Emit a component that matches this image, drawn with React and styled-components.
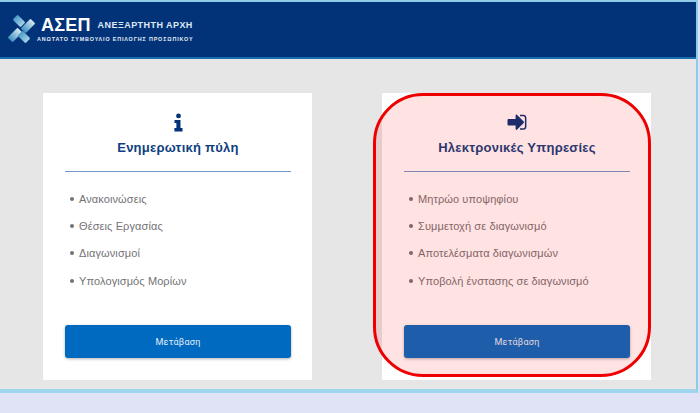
import styled, { createGlobalStyle } from 'styled-components'

const GlobalStyle = createGlobalStyle`
  html, body {
    margin: 0;
    padding: 0;
    background: #dfe3f5;
    font-family: "Liberation Sans", Arial, sans-serif;
  }
`
const Page = styled.div`
  width: 700px;
  height: 413px;
  overflow: hidden;
  display: flex;
  flex-direction: column;
`
const Frame = styled.div`
  width: 698px;
  height: 393px;
  display: flex;
  flex-direction: column;
  border-top: 2px solid #8fcbe6;
  border-right: 2px solid #8fcbe6;
  border-bottom: 4px solid #9fd6ee;
  box-sizing: border-box;
`
const Header = styled.header`
  height: 57px;
  flex: none;
  box-sizing: border-box;
  background: #023378;
  border-bottom: 2px solid #1c6cb0;
  display: flex;
  align-items: center;
  padding: 0 0 1px 7px;
`
const BrandText = styled.div`
  display: flex;
  flex-direction: column;
  color: #fff;
`
const BrandTop = styled.div`
  display: flex;
  align-items: center;
  gap: 7px;
  margin-left: 4px;
`
const BrandName = styled.span`
  font-size: 18px;
  line-height: 20px;
  font-weight: 700;
  letter-spacing: 0.2px;
`
const BrandTag = styled.span`
  font-size: 9px;
  font-weight: 700;
  letter-spacing: 0.45px;
  color: #dfe9f5;
`
const BrandSub = styled.span`
  font-size: 5.4px;
  line-height: 7px;
  font-weight: 700;
  letter-spacing: 0.85px;
  margin-top: 1px;
  color: #e4ecf6;
`
const Main = styled.main`
  flex: 1;
  background: #e6e6e7;
  display: flex;
  gap: 70px;
  padding: 34px 0 9px 43px;
`
const Card = styled.section`
  position: relative;
  width: 269px;
  box-sizing: border-box;
  background: #fff;
  padding: 19px 21px 22px 22px;
  display: flex;
  flex-direction: column;
`
const IconSlot = styled.div`
  height: 20px;
  display: flex;
  justify-content: center;
  align-items: center;
  color: ${(props) => props.color};
`
const Title = styled.h2`
  margin: 7px 0 0;
  padding-bottom: 15px;
  border-bottom: 1px solid ${(props) => props.line};
  font-size: 13px;
  line-height: 17px;
  font-weight: 700;
  letter-spacing: 0.25px;
  text-align: center;
  color: ${(props) => props.color};
`
const List = styled.ul`
  list-style: none;
  margin: 20px 0 0;
  padding: 0 0 0 5px;
  flex: 1;
  display: flex;
  flex-direction: column;
  gap: 14.4px;
`
const Item = styled.li`
  display: flex;
  align-items: center;
  gap: 5px;
  height: 13px;
  font-size: 11px;
  letter-spacing: 0.1px;
  color: #737376;

  &::before {
    content: '';
    width: 4px;
    height: 4px;
    border-radius: 50%;
    background: #737376;
  }
`
const GoButton = styled.button`
  height: 33px;
  border: 0;
  border-radius: 3px;
  background: #0069c0;
  box-shadow: 0 1px 3px rgba(0, 0, 0, 0.3);
  color: #e3f0fb;
  font-family: Roboto, "Liberation Sans", sans-serif;
  font-size: 9px;
  letter-spacing: 0.25px;
`
const Highlight = styled.div`
  position: absolute;
  left: -9px;
  top: 0;
  width: 278px;
  height: 284px;
  box-sizing: border-box;
  border: 3px solid #ee0000;
  border-radius: 50px;
  background: rgba(255, 0, 0, 0.115);
  pointer-events: none;
`

const Logo = () => (
  <svg width='30' height='30' viewBox='0 0 30 30'>
    <defs>
      <linearGradient id='barLight' x1='0' y1='0' x2='0' y2='1'>
        <stop offset='0' stopColor='#d8e9f2' />
        <stop offset='1' stopColor='#3d8fc0' />
      </linearGradient>
      <linearGradient id='barBlue' x1='0' y1='0' x2='0' y2='1'>
        <stop offset='0' stopColor='#4a9ac8' />
        <stop offset='1' stopColor='#a9d2e6' />
      </linearGradient>
    </defs>
    <rect x='8.5' y='1.5' width='7' height='11' rx='1.2' fill='url(#barBlue)' transform='rotate(-45 12 7)' />
    <rect x='17.5' y='5' width='7' height='14' rx='1.2' fill='url(#barLight)' transform='rotate(45 21 12)' />
    <rect x='4.5' y='14' width='7' height='14' rx='1.2' fill='url(#barLight)' transform='rotate(45 8 21)' />
    <rect x='13.5' y='17.5' width='7' height='11' rx='1.2' fill='url(#barBlue)' transform='rotate(-45 17 23)' />
  </svg>
)

const InfoIcon = () => (
  <svg width='9' height='19' viewBox='0 0 9 18' fill='currentColor'>
    <circle cx='4.5' cy='2.4' r='2.4' />
    <path d='M0.5 6.4h6v8.2h2V18H0.4v-3.4h2V9.6H0.5z' />
  </svg>
)

const SignInIcon = () => (
  <svg width='20' height='17' viewBox='0 0 20 17' fill='currentColor'>
    <path d='M8.6 1.4c0-.7.8-1 1.3-.6l6.8 6.8c.4.4.4 1 0 1.3l-6.8 6.8c-.5.5-1.3.1-1.3-.6v-3.6H1.4c-.5 0-.9-.4-.9-.9V6c0-.5.4-.9.9-.9h7.2z' />
    <path d='M13 .7h3.4c1.7 0 3 1.3 3 3v9.1c0 1.7-1.3 3-3 3H13v-1.5h3.4c.9 0 1.5-.7 1.5-1.5V3.7c0-.9-.7-1.5-1.5-1.5H13z' />
  </svg>
)

const leftItems = ['Ανακοινώσεις', 'Θέσεις Εργασίας', 'Διαγωνισμοί', 'Υπολογισμός Μορίων']
const rightItems = [
  'Μητρώο υποψηφίου',
  'Συμμετοχή σε διαγωνισμό',
  'Αποτελέσματα διαγωνισμών',
  'Υποβολή ένστασης σε διαγωνισμό',
]

function InfoCard({ icon, title, items, highlighted }) {
  return (
    <Card>
      <IconSlot color='#023378'>{icon}</IconSlot>
      <Title color='#0f3f80' line='#7498c8'>
        {title}
      </Title>
      <List>
        {items.map((item) => (
          <Item key={item}>{item}</Item>
        ))}
      </List>
      <GoButton>Μετάβαση</GoButton>
      {highlighted && <Highlight />}
    </Card>
  )
}

export default function App() {
  return (
    <Page>
      <GlobalStyle />
      <Frame>
        <Header>
          <Logo />
          <BrandText>
            <BrandTop>
              <BrandName>ΑΣΕΠ</BrandName>
              <BrandTag>ΑΝΕΞΑΡΤΗΤΗ ΑΡΧΗ</BrandTag>
            </BrandTop>
            <BrandSub>ΑΝΩΤΑΤΟ ΣΥΜΒΟΥΛΙΟ ΕΠΙΛΟΓΗΣ ΠΡΟΣΩΠΙΚΟΥ</BrandSub>
          </BrandText>
        </Header>
        <Main>
          <InfoCard icon={<InfoIcon />} title='Ενημερωτική πύλη' items={leftItems} />
          <InfoCard icon={<SignInIcon />} title='Ηλεκτρονικές Υπηρεσίες' items={rightItems} highlighted />
        </Main>
      </Frame>
    </Page>
  )
}
